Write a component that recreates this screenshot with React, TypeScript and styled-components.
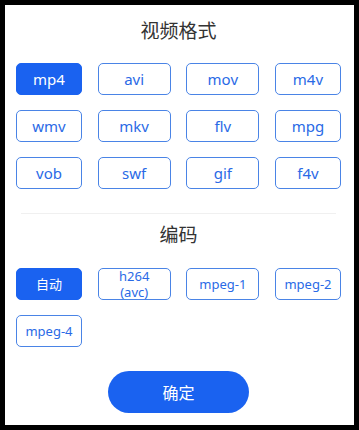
import React, { FC, useState } from "react";
import styled, { createGlobalStyle } from "styled-components";

const GlobalStyle = createGlobalStyle`
  html, body {
    margin: 0;
    padding: 0;
    background: #000;
  }
  body {
    font-family: "Noto Sans", "Noto Sans CJK SC", sans-serif;
  }
`;

const Panel = styled.div`
  margin: 5px;
  width: 349px;
  height: 420px;
  background: #fff;
  box-sizing: border-box;
  padding: 0 13px 0 11px;
  display: flex;
  flex-direction: column;
`;

const Title = styled.h2<{ $height: number }>`
  margin: 0;
  height: ${(p) => p.$height}px;
  line-height: ${(p) => p.$height}px;
  text-align: center;
  font-family: "Noto Sans CJK SC", sans-serif;
  font-size: 19px;
  font-weight: 400;
  color: #333;
`;

const Grid = styled.div<{ $top: number }>`
  margin-top: ${(p) => p.$top}px;
  display: grid;
  grid-template-columns: 66px 73px 73px 66px;
  grid-auto-rows: 32px;
  justify-content: space-between;
  row-gap: 15px;
`;

const Option = styled.button<{ $active: boolean; $small?: boolean }>`
  box-sizing: border-box;
  margin: 0;
  padding: 0;
  border-radius: 5px;
  border: 1.5px solid ${(p) => (p.$active ? "#1a62f0" : "#4a84e6")};
  background: ${(p) => (p.$active ? "#1a62f0" : "#fff")};
  color: ${(p) => (p.$active ? "#fff" : "#2a6ae6")};
  font-family: "Noto Sans", "Noto Sans CJK SC", sans-serif;
  font-size: ${(p) => (p.$small ? 13 : 15)}px;
  line-height: ${(p) => (p.$small ? 16 : 18)}px;
  display: flex;
  flex-direction: column;
  align-items: center;
  justify-content: center;
  text-align: center;
  overflow: visible;
  cursor: pointer;
`;

const Line = styled.span`
  display: block;
`;

const Divider = styled.div`
  margin: 24px 5px 0 5px;
  height: 1px;
  background: #f0f0f0;
`;

const Confirm = styled.button`
  align-self: center;
  margin: 24px 0 0 0;
  width: 141px;
  height: 42px;
  border: none;
  border-radius: 21px;
  background: #1a62f0;
  color: #fff;
  font-family: "Noto Sans CJK SC", sans-serif;
  font-size: 16px;
  cursor: pointer;
`;

const formats = ["mp4", "avi", "mov", "m4v", "wmv", "mkv", "flv", "mpg", "vob", "swf", "gif", "f4v"];
const codecs = ["自动", "h264\n(avc)", "mpeg-1", "mpeg-2", "mpeg-4"];

const App: FC = () => {
  const [format, setFormat] = useState("mp4");
  const [codec, setCodec] = useState("自动");

  return (
    <>
      <GlobalStyle />
      <Panel>
        <Title $height={50}>视频格式</Title>
        <Grid $top={8}>
          {formats.map((f) => (
            <Option key={f} $active={f === format} onClick={() => setFormat(f)}>
              {f}
            </Option>
          ))}
        </Grid>
        <Divider />
        <Title $height={40}>编码</Title>
        <Grid $top={14}>
          {codecs.map((c) => (
            <Option key={c} $small $active={c === codec} onClick={() => setCodec(c)}>
              {c.split("\n").map((line, i) => (
                <Line key={i}>{line}</Line>
              ))}
            </Option>
          ))}
        </Grid>
        <Confirm>确定</Confirm>
      </Panel>
    </>
  );
};

export default App;
